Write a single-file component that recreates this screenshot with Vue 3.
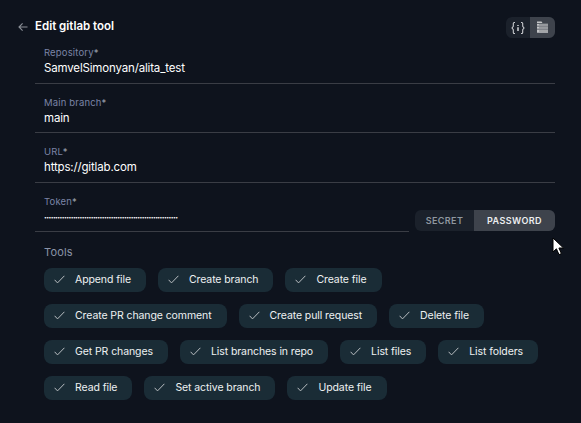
<template>
  <div class="page">
    <header class="head">
      <div class="title">
        <svg class="back" width="10" height="10" viewBox="0 0 10 10" fill="none" stroke="#8b8f97" stroke-width="1.1">
          <path d="M9.5 5H1M4.6 1.4 1 5l3.6 3.6" />
        </svg>
        <strong>Edit gitlab tool</strong>
      </div>
      <div class="switch small">
        <span class="opt icon">
          <svg width="14" height="14" viewBox="0 0 14 14" fill="none" stroke="#c9cbcf" stroke-width="1.1">
            <path d="M4 1.500H3.2Q2.3 1.500 2.300 2.500V5.300L1 7l1.300 1.700v2.800q0 1 .9 1H4M10 1.500h.8q.9 0 .9 1v2.800L13 7l-1.300 1.700v2.800q0 1-.9 1H10" />
            <path d="M7 4v1M7 6.300v3.600" stroke-width="1.600" />
          </svg>
        </span>
        <span class="opt icon on">
          <svg width="13" height="13" viewBox="0 0 13 13" fill="#c4c5c7">
            <path d="M1 .5h4.500l1 1.500H1zM1 2.800h11v2H1zM1 5.600h11v2.200H1zM1 8.600h11v3.200H1z" />
            <path d="M3 3.800h9M3 6.800h9M3 10h9" stroke="#5a5e66" stroke-width=".6" />
          </svg>
        </span>
      </div>
    </header>

    <div class="form">
      <div v-for="f in fields" :key="f.label" class="field">
        <label>{{ f.label }}<i>*</i></label>
        <div class="value">{{ f.value }}</div>
      </div>

      <div class="token-row">
        <div class="field token">
          <label>Token<i>*</i></label>
          <div class="value dots">{{ dots }}</div>
        </div>
        <div class="switch wide">
          <span class="opt secret">SECRET</span>
          <span class="opt pass on">PASSWORD</span>
        </div>
      </div>
    </div>

    <section class="tools">
      <h4>Tools</h4>
      <div class="chips">
        <div v-for="t in tools" :key="t" class="chip">
          <svg width="11" height="9" viewBox="0 0 11 9" fill="none" stroke="#b9bec2" stroke-width="1">
            <path d="M.6 4.800 3.500 7.900 10.400.8" />
          </svg>
          <span>{{ t }}</span>
        </div>
      </div>
    </section>

    <svg class="cursor" width="13" height="19" viewBox="0 0 13 19">
      <path d="M1 1v14l3.400-3.200L7 17.600l2.400-1-2.500-5.600H11.500z" fill="#fff" stroke="#000" stroke-width="1" />
    </svg>
  </div>
</template>

<script setup>
const fields = [
  { label: 'Repository', value: 'SamvelSimonyan/alita_test' },
  { label: 'Main branch', value: 'main' },
  { label: 'URL', value: 'https://gitlab.com' },
];

const dots = '•'.repeat(60);

const tools = [
  'Append file',
  'Create branch',
  'Create file',
  'Create PR change comment',
  'Create pull request',
  'Delete file',
  'Get PR changes',
  'List branches in repo',
  'List files',
  'List folders',
  'Read file',
  'Set active branch',
  'Update file',
];
</script>

<style>
html, body {
  margin: 0;
  background: #0e131d;
}
</style>

<style scoped>
.page {
  position: relative;
  width: 581px;
  height: 423px;
  box-sizing: border-box;
  padding: 17px 26px 0 18px;
  background: #0e131d;
  color: #fff;
  font-family: Inter, "Liberation Sans", sans-serif;
  overflow: hidden;
}

.head {
  display: flex;
  justify-content: space-between;
  align-items: flex-start;
  height: 21px;
}

.title {
  display: flex;
  align-items: center;
  gap: 7px;
  height: 17px;
}

.title strong {
  font-size: 11.5px;
  font-weight: 600;
  letter-spacing: 0;
}

.back {
  margin-top: 3px;
}

.switch {
  display: flex;
  height: 21px;
  border-radius: 6px;
  overflow: hidden;
  background: #1b212b;
}

.opt {
  display: flex;
  align-items: center;
  justify-content: center;
}

.opt.on {
  background: #3e434c;
}

.small .opt:first-child {
  width: 24px;
}

.small .opt:last-child {
  width: 25px;
}

.form {
  margin: 0 0 0 17px;
}

.field {
  height: 49.3px;
  box-sizing: border-box;
  padding: 12px 0 0 9px;
  border-bottom: 1px solid #3a3d45;
}

.form > .field:first-child {
  height: 46px;
  padding-top: 8px;
}

label {
  display: block;
  height: 13px;
  font-size: 9.5px;
  line-height: 13px;
  color: #7b84a6;
  letter-spacing: 0.15px;
}

label i {
  font-style: normal;
  color: #9aa0ad;
}

.value {
  font-size: 11.5px;
  line-height: 17px;
  margin-top: 1px;
  letter-spacing: -0.16px;
}

.dots {
  font-size: 5px;
  letter-spacing: -0.59px;
  white-space: nowrap;
  overflow: hidden;
}

.token-row {
  display: flex;
  align-items: flex-end;
  justify-content: space-between;
}

.token {
  width: 374px;
}

.wide {
  width: 140px;
  margin-bottom: 1px;
  font-size: 9px;
  font-weight: 600;
  letter-spacing: 0.4px;
}

.secret {
  width: 59px;
  color: #8f979f;
}

.pass {
  flex: 1;
  color: #eceef0;
}

.tools {
  padding-left: 26px;
  margin-top: 13px;
}

h4 {
  margin: 0 0 9px;
  font-size: 11px;
  line-height: 14px;
  font-weight: 400;
  color: #8a93a8;
  letter-spacing: 0.15px;
}

.chips {
  display: flex;
  flex-wrap: wrap;
  gap: 12px;
}

.chip {
  display: flex;
  align-items: center;
  gap: 10px;
  height: 24px;
  padding: 0 15px 0 10px;
  border-radius: 8px;
  background: #1a2c36;
  font-size: 10.5px;
  letter-spacing: -0.09px;
  color: #eef1f2;
}

.cursor {
  position: absolute;
  left: 552px;
  top: 237px;
}
</style>
